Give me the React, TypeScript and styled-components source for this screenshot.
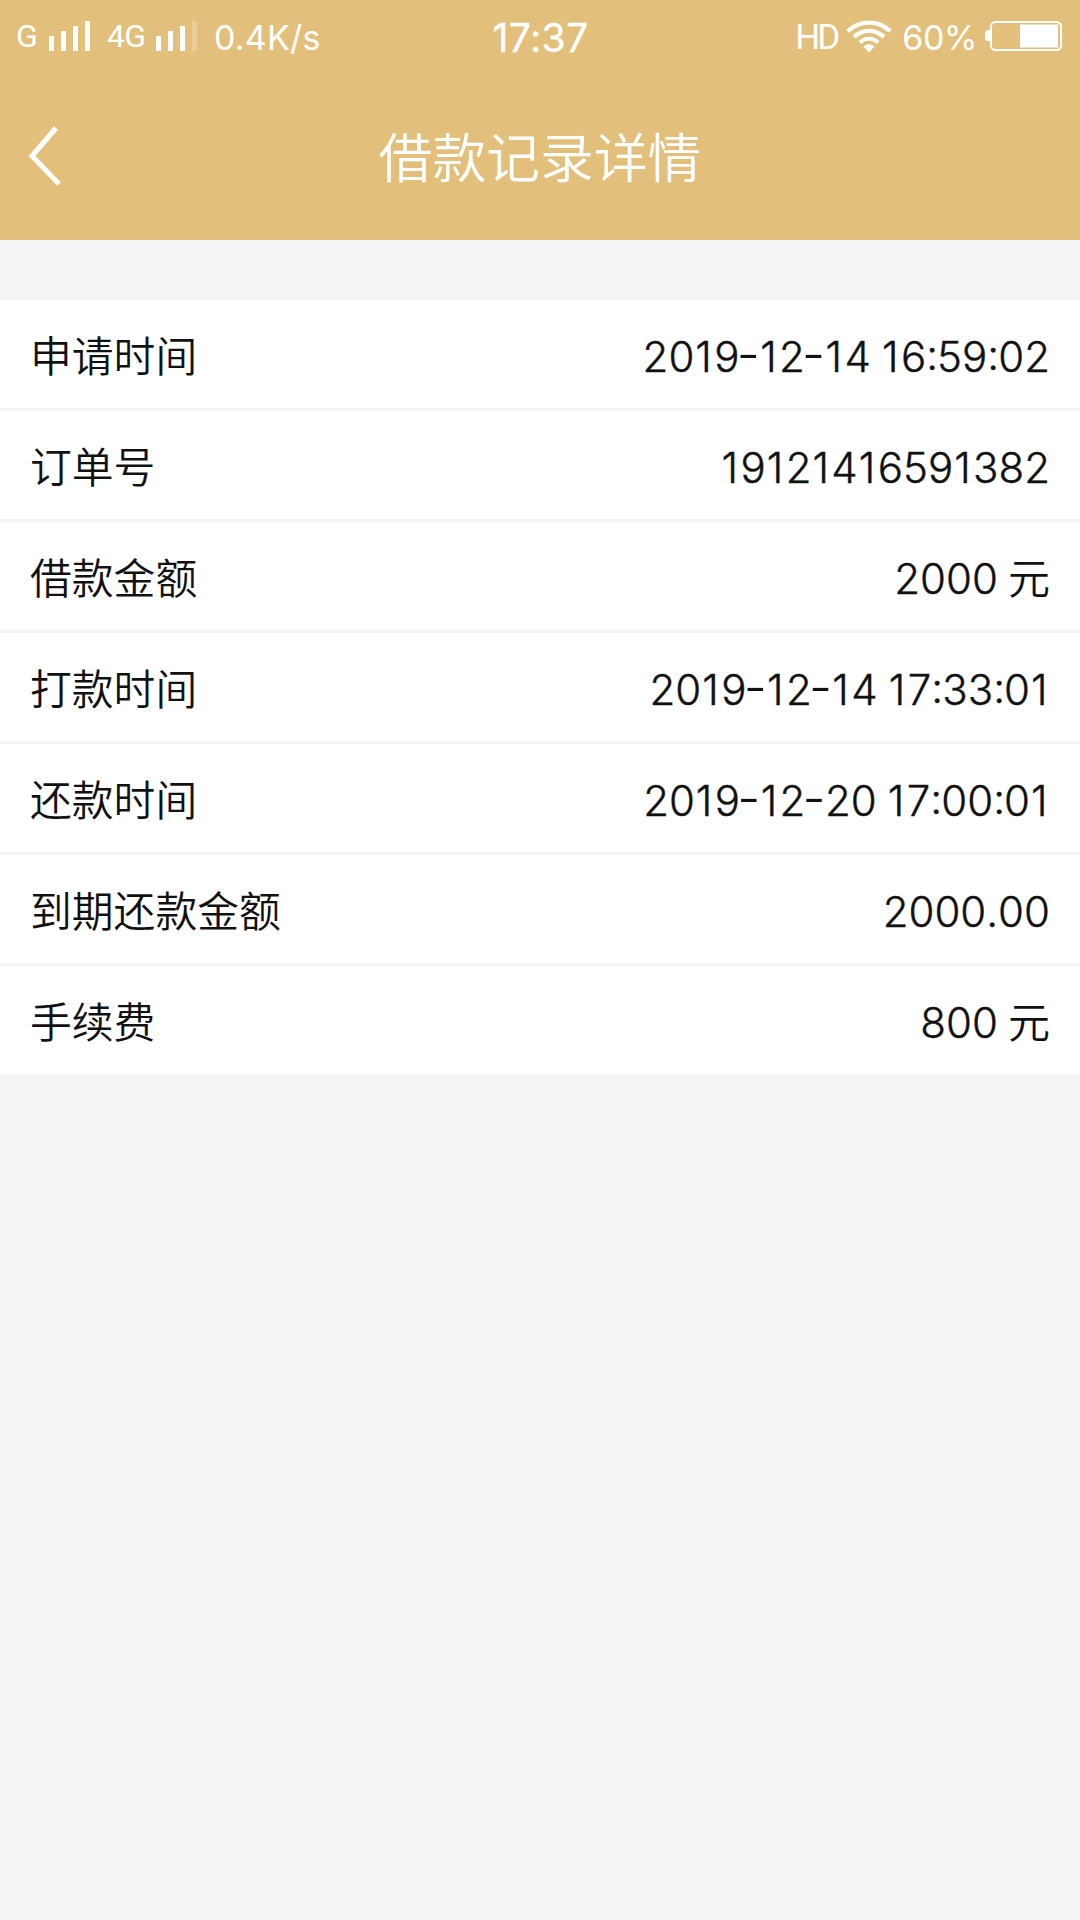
import React from "react";
import styled, { createGlobalStyle, css } from "styled-components";

const GlobalStyle = createGlobalStyle`
  * { box-sizing: border-box; }
  body { margin: 0; background: #f4f4f4; }
`;

const Screen = styled.main`
  display: flex;
  flex-direction: column;
  width: 1080px;
  min-height: 1920px;
  background: #f4f4f4;
  color: #111;
  font-family: Inter, "Noto Sans CJK SC", sans-serif;
`;

const Header = styled.header`
  display: flex;
  flex-direction: column;
  height: 240px;
  background: #e2c07b;
  color: #fff;
`;

const StatusBar = styled.div`
  display: grid;
  grid-template-columns: 1fr auto 1fr;
  align-items: center;
  height: 72px;
  padding: 0 18px 0 16px;
  line-height: 1;
`;

const StatusGroup = styled.div<{ $end?: boolean }>`
  display: flex;
  align-items: center;
  justify-content: ${(p) => (p.$end ? "flex-end" : "flex-start")};
  height: 72px;
`;

const Network = styled.span<{ $width: number; $gap?: number }>`
  flex: none;
  width: ${(p) => p.$width}px;
  margin-left: ${(p) => p.$gap ?? 0}px;
  padding-bottom: 1px;
  font: 400 32px/1 Roboto, sans-serif;
  letter-spacing: -0.8px;
  white-space: nowrap;
`;

const Signal = styled.div`
  display: flex;
  align-items: flex-end;
  gap: 7px;
  height: 30px;
`;

const SignalBar = styled.i<{ $height: number; $dim?: boolean }>`
  width: 5px;
  height: ${(p) => p.$height}px;
  background: #fff;
  opacity: ${(p) => (p.$dim ? 0.22 : 1)};
`;

const Speed = styled.span`
  margin-left: 17px;
  padding-top: 4px;
  font-size: 34px;
  letter-spacing: 0.2px;
`;

const Clock = styled.time`
  padding: 2px 0 0 3px;
  font-size: 39px;
  font-weight: 400;
  letter-spacing: 0.4px;
  -webkit-text-stroke: 0.3px #fff;
`;

const HdLabel = styled.span`
  margin-right: 9px;
  padding-top: 2px;
  font: 400 35px/1 Roboto, sans-serif;
  letter-spacing: -3px;
`;

const Percent = styled.span`
  margin: 0 8px 0 10px;
  padding-top: 4px;
  font-size: 34px;
  letter-spacing: -0.4px;
`;

const NavBar = styled.div`
  display: grid;
  grid-template-columns: 120px 1fr 120px;
  align-items: center;
  height: 168px;
`;

const BackButton = styled.button`
  display: flex;
  align-items: center;
  height: 168px;
  padding: 0 0 0 26px;
  border: 0;
  background: none;
  color: #fff;
`;

const Title = styled.h1`
  margin: 0;
  padding-bottom: 3px;
  font: 350 53.8px/80px "Noto Sans CJK SC", sans-serif;
  text-align: center;
`;

const Records = styled.dl`
  display: flex;
  flex-direction: column;
  gap: 3px;
  margin: 60px 0 0;
`;

const Row = styled.div`
  display: flex;
  align-items: center;
  justify-content: space-between;
  height: 108px;
  padding: 6px 30px 0;
  background: #fff;
  font-size: 42px;
  line-height: 60px;
`;

const Label = styled.dt`
  margin: 0;
  padding-bottom: 7px;
  font-family: "Noto Sans CJK SC", sans-serif;
  font-size: 41.8px;
  font-weight: 350;
`;

const Value = styled.dd`
  margin: 0;
  font-weight: 300;
  font-kerning: none;
  font-feature-settings: "case";
  white-space: pre;
  -webkit-text-stroke: 0.4px #111;
`;

const glyphStyles: Record<string, ReturnType<typeof css>> = {
  "1": css`
    margin-left: 1px;
    letter-spacing: 2.4px;
  `,
  "-": css`
    margin-left: -2.8px;
    letter-spacing: -0.7px;
    font-size: 51px;
    line-height: 1;
    vertical-align: -3px;
    -webkit-text-stroke: 0;
  `,
  ":": css`
    letter-spacing: -0.9px;
    vertical-align: -2px;
    line-height: 1;
  `,
  " ": css`
    letter-spacing: -1.7px;
  `,
  元: css`
    font-weight: 350;
    -webkit-text-stroke: 0;
  `,
};

const Glyph = styled.span<{ $char: string }>`
  ${(p) => glyphStyles[p.$char]}
`;

const records = [
  ["申请时间", "2019-12-14 16:59:02"],
  ["订单号", "19121416591382"],
  ["借款金额", "2000 元"],
  ["打款时间", "2019-12-14 17:33:01"],
  ["还款时间", "2019-12-20 17:00:01"],
  ["到期还款金额", "2000.00"],
  ["手续费", "800 元"],
];

function SpacedText({ text }: { text: string }) {
  return (
    <>
      {text
        .split(/([-1: 元])/)
        .filter(Boolean)
        .map((part, i) =>
          part in glyphStyles ? (
            <Glyph key={i} $char={part}>
              {part}
            </Glyph>
          ) : (
            part
          )
        )}
    </>
  );
}

function SignalBars({ level }: { level: number }) {
  return (
    <Signal>
      {[15, 20, 25, 30].map((h, i) => (
        <SignalBar key={h} $height={h} $dim={i >= level} />
      ))}
    </Signal>
  );
}

function WifiIcon() {
  return (
    <svg width="46" height="34" viewBox="0 0 46 34" fill="none" stroke="#fff" strokeWidth="4.2">
      <path d="M1.8 12.3a30 30 0 0 1 42.4 0" />
      <path d="M8 18a21.2 21.2 0 0 1 30 0" />
      <path d="M14 23.5a12.7 12.7 0 0 1 18 0" />
      <path d="M17.5 27.5a8 8 0 0 1 11 0L23 33.5z" fill="#fff" stroke="none" />
    </svg>
  );
}

function BatteryIcon() {
  return (
    <svg width="77" height="30" viewBox="0 0 77 30">
      <path d="M5 9H3.5Q0 9 0 13v3q0 4 3.5 4H5z" fill="#fff" />
      <rect x="6" y="1" width="70" height="28" rx="4.5" fill="none" stroke="#fff" strokeWidth="2" />
      <rect x="35" y="3.5" width="38" height="23" fill="#fff" />
    </svg>
  );
}

export default function App() {
  return (
    <Screen>
      <GlobalStyle />
      <Header>
        <StatusBar>
          <StatusGroup>
            <Network $width={33}>G</Network>
            <SignalBars level={4} />
            <Network $width={49} $gap={17}>4G</Network>
            <SignalBars level={3} />
            <Speed>0.4K/s</Speed>
          </StatusGroup>
          <Clock>17:37</Clock>
          <StatusGroup $end>
            <HdLabel>HD</HdLabel>
            <WifiIcon />
            <Percent>60%</Percent>
            <BatteryIcon />
          </StatusGroup>
        </StatusBar>
        <NavBar>
          <BackButton aria-label="返回">
            <svg width="36" height="64" viewBox="0 0 36 64" fill="none" stroke="#fff" strokeWidth="5">
              <path d="M30 4 6 32l27 28" />
            </svg>
          </BackButton>
          <Title>借款记录详情</Title>
        </NavBar>
      </Header>
      <Records>
        {records.map(([label, value]) => (
          <Row key={label}>
            <Label>{label}</Label>
            <Value>
              <SpacedText text={value} />
            </Value>
          </Row>
        ))}
      </Records>
    </Screen>
  );
}
